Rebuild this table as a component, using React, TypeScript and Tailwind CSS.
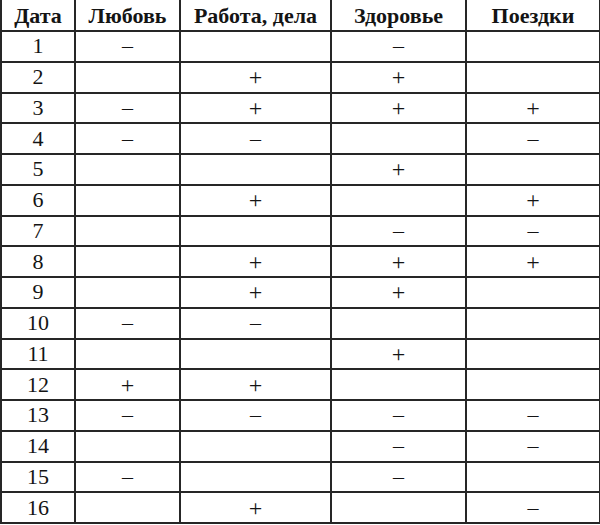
import React from "react";

const headers = ["Дата", "Любовь", "Работа, дела", "Здоровье", "Поездки"];

const rows: string[][] = [
  ["1", "–", "", "–", ""],
  ["2", "", "+", "+", ""],
  ["3", "–", "+", "+", "+"],
  ["4", "–", "–", "", "–"],
  ["5", "", "", "+", ""],
  ["6", "", "+", "", "+"],
  ["7", "", "", "–", "–"],
  ["8", "", "+", "+", "+"],
  ["9", "", "+", "+", ""],
  ["10", "–", "–", "", ""],
  ["11", "", "", "+", ""],
  ["12", "+", "+", "", ""],
  ["13", "–", "–", "–", "–"],
  ["14", "", "", "–", "–"],
  ["15", "–", "", "–", ""],
  ["16", "", "+", "", "–"],
];

export default function App() {
  return (
    <div
      className="w-[600px] h-[525px] bg-white text-[#141414] overflow-hidden"
      style={{ fontFamily: '"Liberation Serif", "DejaVu Serif", serif' }}
    >
      <div className="grid w-[599px] grid-cols-[74px_105px_151px_135px_134px] grid-rows-[32px_repeat(16,30.75px)] border-l-2 border-[#262626]">
        {headers.map((h) => (
          <div
            key={h}
            className="flex items-center justify-center border-r-2 border-b-2 border-[#262626] text-[22px] font-bold leading-none pt-[1px]"
          >
            {h}
          </div>
        ))}
        {rows.map((r, i) =>
          r.map((c, j) => (
            <div
              key={`${i}-${j}`}
              className="flex items-center justify-center border-r-2 border-b-2 border-[#262626] text-[22px] leading-none"
            >
              {c === "+" ? <span className="text-[24px] font-light">+</span> : c}
            </div>
          ))
        )}
      </div>
    </div>
  );
}
